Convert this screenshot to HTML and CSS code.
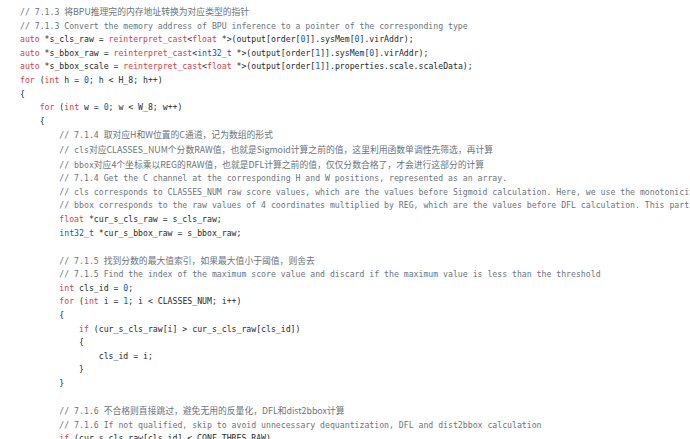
FILE: index.html
```html
<!DOCTYPE html>
<html lang="zh">
<head>
<meta charset="utf-8">
<link rel="stylesheet" href="styles.css">
</head>
<body>
<pre class="code"><code><span class="c">// 7.1.3 <span class="zh">将BPU推理完的内存地址转换为对应类型的指针</span></span>
<span class="c">// 7.1.3 Convert the memory address of BPU inference to a pointer of the corresponding type</span>
<span class="k">auto</span> *s_cls_raw = <span class="k">reinterpret_cast</span>&lt;<span class="k">float</span> *&gt;(output[order[<span class="n">0</span>]].sysMem[<span class="n">0</span>].virAddr);
<span class="k">auto</span> *s_bbox_raw = <span class="k">reinterpret_cast</span>&lt;<span class="t">int32_t</span> *&gt;(output[order[<span class="n">1</span>]].sysMem[<span class="n">0</span>].virAddr);
<span class="k">auto</span> *s_bbox_scale = <span class="k">reinterpret_cast</span>&lt;<span class="k">float</span> *&gt;(output[order[<span class="n">1</span>]].properties.scale.scaleData);
<span class="k">for</span> (<span class="k">int</span> h = <span class="n">0</span>; h &lt; H_8; h++)
{
    <span class="k">for</span> (<span class="k">int</span> w = <span class="n">0</span>; w &lt; W_8; w++)
    {
        <span class="c">// 7.1.4 <span class="zh">取对应H和W位置的C通道，记为数组的形式</span></span>
        <span class="c">// cls<span class="zh">对应CLASSES_NUM个分数RAW值，也就是Sigmoid计算之前的值，这里利用函数单调性先筛选，再计算</span></span>
        <span class="c">// bbox<span class="zh">对应4个坐标乘以REG的RAW值，也就是DFL计算之前的值，仅仅分数合格了，才会进行这部分的计算</span></span>
        <span class="c">// 7.1.4 Get the C channel at the corresponding H and W positions, represented as an array.</span>
        <span class="c">// cls corresponds to CLASSES_NUM raw score values, which are the values before Sigmoid calculation. Here, we use the monotonicity of the function to filter first, then calculate.</span>
        <span class="c">// bbox corresponds to the raw values of 4 coordinates multiplied by REG, which are the values before DFL calculation. This part is only calculated if the score is qualified.</span>
        <span class="k">float</span> *cur_s_cls_raw = s_cls_raw;
        <span class="t">int32_t</span> *cur_s_bbox_raw = s_bbox_raw;

        <span class="c">// 7.1.5 <span class="zh">找到分数的最大值索引，如果最大值小于阈值，则舍去</span></span>
        <span class="c">// 7.1.5 Find the index of the maximum score value and discard if the maximum value is less than the threshold</span>
        <span class="k">int</span> cls_id = <span class="n">0</span>;
        <span class="k">for</span> (<span class="k">int</span> i = <span class="n">1</span>; i &lt; CLASSES_NUM; i++)
        {
            <span class="k">if</span> (cur_s_cls_raw[i] &gt; cur_s_cls_raw[cls_id])
            {
                cls_id = i;
            }
        }

        <span class="c">// 7.1.6 <span class="zh">不合格则直接跳过，避免无用的反量化，DFL和dist2bbox计算</span></span>
        <span class="c">// 7.1.6 If not qualified, skip to avoid unnecessary dequantization, DFL and dist2bbox calculation</span>
        <span class="k">if</span> (cur_s_cls_raw[cls_id] &lt; CONF_THRES_RAW)</code></pre>
</body>
</html>
```
FILE: styles.css
```css
html, body {
  margin: 0;
  padding: 0;
  background: #ffffff;
  overflow: hidden;
}

.code {
  margin: 0;
  padding: 5px 0 0 20px;
  font-family: "DejaVu Sans Mono", "Noto Sans CJK SC", monospace;
  font-size: 8.18px;
  line-height: 13.6px;
  color: #24292e;
  white-space: pre;
  overflow: hidden;
}

.c { color: #6a737d; }
.k { color: #d73a49; }
.t { color: #005cc5; }
.n { color: #005cc5; }

.zh {
  font-family: "Noto Sans CJK SC", sans-serif;
  font-size: 8.8px;
}
```
